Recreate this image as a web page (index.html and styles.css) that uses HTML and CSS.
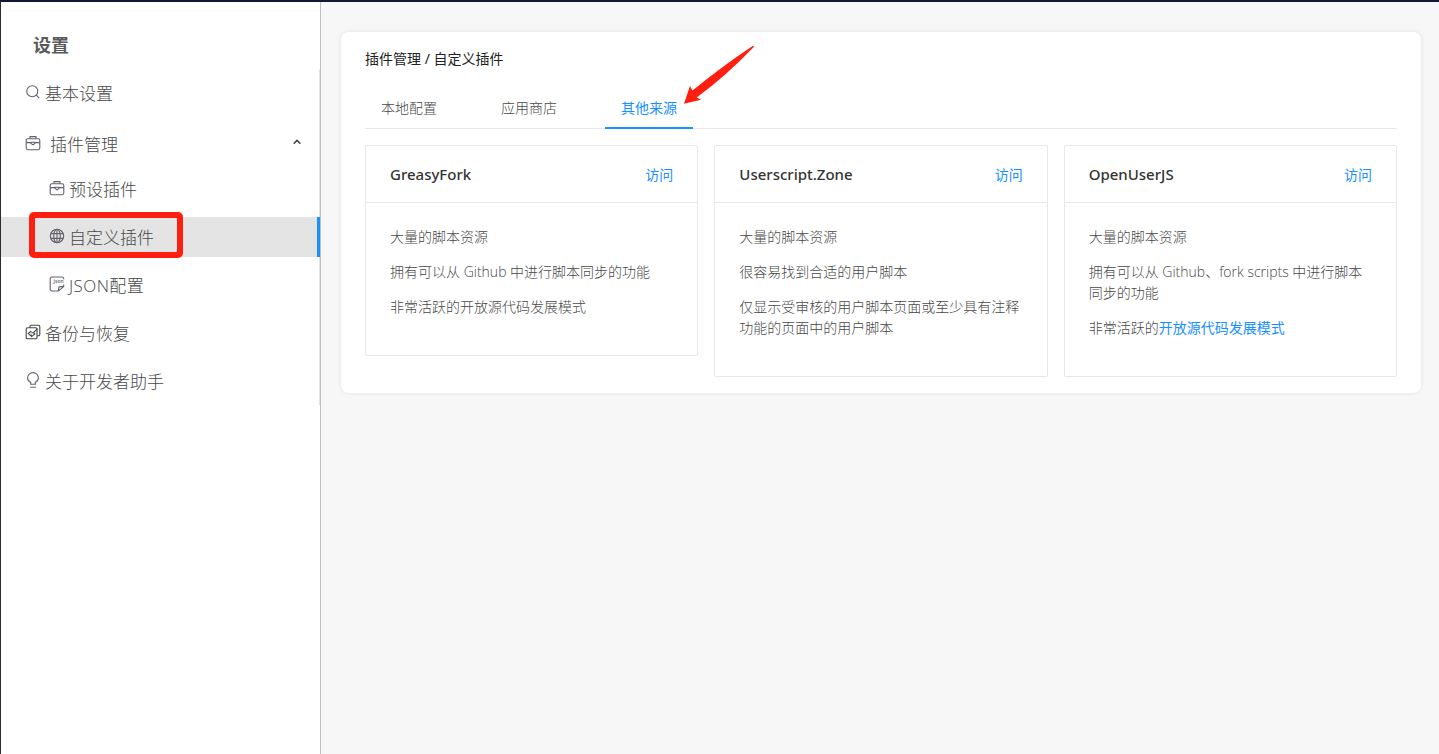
FILE: index.html
```html
<!DOCTYPE html>
<html lang="zh-CN">
<head>
  <meta charset="UTF-8">
  <meta name="viewport" content="width=device-width, initial-scale=1.0">
  <title>设置</title>
  <link rel="stylesheet" href="styles.css">
</head>
<body>

  <!-- Sidebar -->
  <aside class="sidebar">
    <h1 class="sidebar-title">设置</h1>
    <nav class="menu">
      <a class="menu-item">
        <svg class="icon" viewBox="0 0 16 16"><circle cx="7.3" cy="7.2" r="5.5"/><path d="M11.3 11.2l3 3"/></svg>
        <span>基本设置</span>
      </a>
      <a class="menu-item submenu-title">
        <svg class="icon" viewBox="0 0 16 16"><rect x="1.2" y="3.7" width="13.6" height="11" rx="1.6"/><path d="M5 3.5V1.6h6v1.9M1.2 7.6h4.9M9.9 7.6h4.9M6.1 7.2v1.2l1.9 1.5 1.9-1.5V7.2z"/></svg>
        <span>插件管理</span>
        <svg class="arrow" viewBox="0 0 10 10"><path d="M1.7 6.7L5 3.4l3.3 3.3"/></svg>
      </a>
      <a class="menu-item child">
        <svg class="icon" viewBox="0 0 16 16"><rect x="1.2" y="3.7" width="13.6" height="11" rx="1.6"/><path d="M5 3.5V1.6h6v1.9M1.2 7.6h4.9M9.9 7.6h4.9M6.1 7.2v1.2l1.9 1.5 1.9-1.5V7.2z"/></svg>
        <span>预设插件</span>
      </a>
      <a class="menu-item child selected">
        <svg class="icon" viewBox="0 0 16 16"><circle cx="8" cy="8" r="6.7"/><ellipse cx="8" cy="8" rx="3.3" ry="6.7"/><path d="M8 1.3v13.4M1.8 5.6h12.4M1.8 10.4h12.4"/></svg>
        <span>自定义插件</span>
        <i class="mark-box"></i>
      </a>
      <a class="menu-item child">
        <svg class="icon" viewBox="0 0 16 16"><path d="M14.7 3.2v-.4A1.8 1.8 0 0 0 12.9 1H3A1.8 1.8 0 0 0 1.2 2.8v10.4A1.8 1.8 0 0 0 3 15h6.6l5.1-4.4V8.4M14.7 10.6h-3.3a1.8 1.8 0 0 0-1.8 1.8V15"/><text x="4.6" y="7.3">json</text></svg>
        <span class="json">JSON配置</span>
      </a>
      <a class="menu-item">
        <svg class="icon dark" viewBox="0 0 16 16"><path d="M5 3.8V2.5a1.2 1.2 0 0 1 1.2-1.2h7.4a1.2 1.2 0 0 1 1.2 1.2v8a1.2 1.2 0 0 1-1.2 1.2h-1.4"/><rect x="1.2" y="3.8" width="10.8" height="11" rx="1.3"/><path d="M6.3 7l-3 2.6 3 2.6v-1.8M6.3 8.7h2.2l4-4M6.8 12.4l3-2.4-1.5-1.3"/></svg>
        <span>备份与恢复</span>
      </a>
      <a class="menu-item">
        <svg class="icon" viewBox="0 0 16 16"><path d="M5.7 12.2v-1.7C3.9 9.5 2.6 8.2 2.6 6a5.4 5.4 0 0 1 10.8 0c0 2.2-1.3 3.500-3.100 4.500v1.700zM5.200 15.200h5.600"/></svg>
        <span>关于开发者助手</span>
      </a>
    </nav>
  </aside>

  <!-- Content -->
  <main class="content">
    <section class="panel">
      <div class="breadcrumb">插件管理 / 自定义插件</div>

      <div class="tabs">
        <a class="tab">本地配置</a>
        <a class="tab">应用商店</a>
        <a class="tab active">其他来源
          <svg class="mark-arrow" viewBox="0 0 72 62"><path d="M71.2 1.4L70 .7Q38 22 9.5 45.6L7 41 1 58.7 18 54.7 13.7 52.5Q44 30 71.2 1.4z"/></svg>
        </a>
      </div>

      <div class="cards">
        <article class="card">
          <header class="card-head">
            <h2>GreasyFork</h2>
            <a class="link">访问</a>
          </header>
          <div class="card-body">
            <p>大量的脚本资源</p>
            <p>拥有可以从 Github 中进行脚本同步的功能</p>
            <p>非常活跃的开放源代码发展模式</p>
          </div>
        </article>

        <article class="card">
          <header class="card-head">
            <h2>Userscript.Zone</h2>
            <a class="link">访问</a>
          </header>
          <div class="card-body">
            <p>大量的脚本资源</p>
            <p>很容易找到合适的用户脚本</p>
            <p>仅显示受审核的用户脚本页面或至少具有注释功能的页面中的用户脚本</p>
          </div>
        </article>

        <article class="card">
          <header class="card-head">
            <h2>OpenUserJS</h2>
            <a class="link">访问</a>
          </header>
          <div class="card-body">
            <p>大量的脚本资源</p>
            <p>拥有可以从 Github、fork scripts 中进行脚本同步的功能</p>
            <p>非常活跃的<a class="link">开放源代码发展模式</a></p>
          </div>
        </article>
      </div>
    </section>
  </main>

</body>
</html>
```
FILE: styles.css
```css
/* General Styles */
* {
  box-sizing: border-box;
}

body {
  display: flex;
  height: 100vh;
  margin: 0;
  border-top: 2px solid #11173a;
  border-left: 1px solid #2d2b2f;
  background: #f7f7f7;
  color: #484848;
  font-family: "Open Sans", "Noto Sans CJK SC", sans-serif;
  font-size: 14px;
  font-weight: 300;
  line-height: 21px;
  overflow: hidden;
}

/* Sidebar */
.sidebar {
  flex: none;
  width: 320px;
  border-right: 1px solid #bfbfbf;
  background: #fff;
}

.sidebar-title {
  margin: 0;
  padding: 30px 32px 10px;
  color: #5a5a5a;
  font-size: 18px;
  font-weight: 700;
  line-height: 27px;
}

.menu {
  display: flex;
  flex-direction: column;
  gap: 8px;
  padding: 4px 0;
  border-right: 1px solid #e3e3e3;
}

.menu-item {
  position: relative;
  display: flex;
  align-items: center;
  gap: 4px;
  height: 40px;
  padding: 1px 24px 0;
  font-size: 17px;
  white-space: nowrap;
}

.menu-item.child {
  padding-left: 48px;
}

.submenu-title {
  gap: 9px;
  padding: 7px 17px 0 24px;
}

.menu-item.selected {
  margin-right: -1px;
  border-right: 3px solid #1890ff;
  background: #e4e4e4;
}

.json {
  letter-spacing: 0.4px;
}

/* Icons */
.icon {
  flex: none;
  width: 16px;
  height: 16px;
  margin-top: -4px;
  fill: none;
  stroke: #62626e;
  stroke-width: 1.1;
}

.icon.dark {
  stroke: #444;
}

.icon text {
  fill: #62626e;
  stroke: none;
  font-size: 5px;
  font-weight: 600;
}

.arrow {
  width: 10px;
  height: 10px;
  margin: -6px 0 0 auto;
  fill: none;
  stroke: #444;
  stroke-width: 1.5;
}

/* Red marks */
.mark-box {
  position: absolute;
  top: -5px;
  left: 28px;
  width: 154px;
  height: 46px;
  border: 6px solid #ff1f11;
  border-radius: 5px;
}

.mark-arrow {
  position: absolute;
  top: -42px;
  left: 78px;
  width: 72px;
  height: 62px;
  fill: #ff1f11;
}

/* Content */
.content {
  flex: 1;
  padding: 30px 18px 0 20px;
}

.panel {
  padding: 16px 24px 16px;
  border-radius: 8px;
  background: #fff;
  box-shadow: 0 0 5px rgba(0, 0, 0, 0.09);
}

.breadcrumb {
  color: #222;
  font-family: "Noto Sans", "Noto Sans CJK SC", sans-serif;
  font-weight: 400;
}

/* Tabs */
.tabs {
  display: flex;
  gap: 32px;
  margin: 18px 0 16px;
  border-bottom: 1px solid #e8e8e8;
}

.tab {
  position: relative;
  height: 42px;
  margin-bottom: -1px;
  padding: 10px 16px;
}

.tab.active {
  border-bottom: 2px solid #1890ff;
  color: #1890ff;
  font-weight: 400;
}

/* Cards */
.cards {
  display: grid;
  grid-template-columns: repeat(3, 1fr);
  align-items: start;
  gap: 16px;
}

.card {
  border: 1px solid #e8e8e8;
  border-radius: 2px;
}

.card-head {
  display: flex;
  align-items: center;
  justify-content: space-between;
  height: 57px;
  padding: 0 24px;
  border-bottom: 1px solid #e8e8e8;
}

.card-head h2 {
  margin: 0;
  color: #333;
  font-family: "Noto Sans", sans-serif;
  font-size: 15px;
  font-weight: 500;
}

.link {
  color: #1890ff;
  font-weight: 400;
}

.card-body {
  padding: 23px 24px 24px;
}

.card-body p {
  margin: 0 0 14px;
}
```
